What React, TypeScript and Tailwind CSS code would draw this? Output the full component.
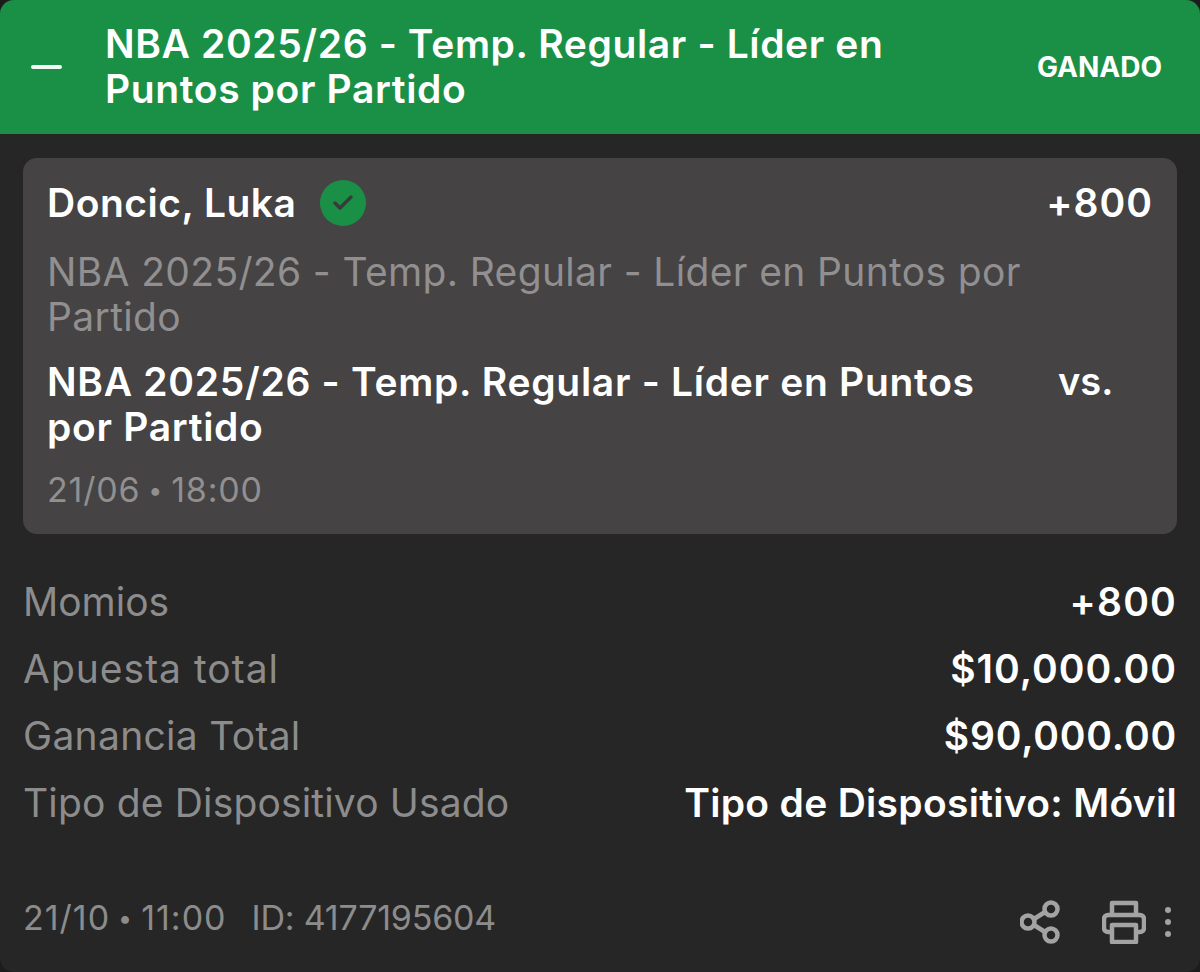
import { Check } from 'lucide-react';

const rows = [
  { label: 'Momios', value: '+800', labelClass: 'tracking-[0px]', valueClass: 'tracking-[1.2px]' },
  { label: 'Apuesta total', value: '$10,000.00', labelClass: 'tracking-[1px]', valueClass: 'tracking-[1px]' },
  { label: 'Ganancia Total', value: '$90,000.00', labelClass: 'tracking-[0.3px]', valueClass: 'tracking-[0.8px]' },
  { label: 'Tipo de Dispositivo Usado', value: 'Tipo de Dispositivo: Móvil', labelClass: 'tracking-[0.16px]', valueClass: 'tracking-[0.3px]' },
];

function Dot() {
  return <span className="text-[25px] mx-[8px] align-[3px]">•</span>;
}

export default function App() {
  return (
    <div className="w-[1200px] h-[972px] bg-[#1c1c1c]">
      <div className="h-full bg-[#262626] rounded-[14px] flex flex-col font-['Inter',sans-serif] overflow-hidden">
        {/* Header */}
        <div className="h-[134px] bg-[#1a9047] flex items-center pl-[31px] pr-[38px] text-white">
          <div className="w-[31px] h-[4px] bg-[#f3f8f4] rounded-full mr-[43px]"></div>
          <div className="flex-1 text-[39px] leading-[45px] font-semibold tracking-[0.62px] -mt-[3px]">
            NBA 2025/26 - Temp. Regular - Líder en<br />Puntos por Partido
          </div>
          <div className="text-[28px] font-bold">GANADO</div>
        </div>

        <div className="px-[23px] pt-[24px] flex-1 flex flex-col">
          {/* Selection card */}
          <div className="h-[376px] bg-[#454344] rounded-[14px] pl-[24px] pr-[24px] pt-[22px]">
            <div className="flex items-center justify-between h-[46px]">
              <div className="flex items-center">
                <span className="text-[39px] font-semibold text-white tracking-[0.5px]">Doncic, Luka</span>
                <span className="ml-[24px] w-[46px] h-[46px] rounded-full bg-[#1a9047] flex items-center justify-center">
                  <Check className="w-[24px] h-[24px] text-[#3a3a3a]" strokeWidth={3.5} />
                </span>
              </div>
              <span className="text-[39px] font-semibold text-white tracking-[1px]">+800</span>
            </div>
            <div className="mt-[23px] text-[39px] leading-[45px] text-[#918f90] tracking-[0.35px]">
              NBA 2025/26 - Temp. Regular - Líder en Puntos por<br />Partido
            </div>
            <div className="mt-[20px] flex items-start text-[39px] leading-[45px] font-semibold text-white tracking-[0.7px]">
              <div className="w-[1011px]">
                NBA 2025/26 - Temp. Regular - Líder en Puntos<br />por Partido
              </div>
              <div className="text-[38px] tracking-[0px]">vs.</div>
            </div>
            <div className="mt-[18px] text-[34px] leading-[45px] text-[#918f90] tracking-[0.8px]">21/06<Dot />18:00</div>
          </div>

          {/* Bet details */}
          <div className="mt-[46px] flex flex-col gap-[22px]">
            {rows.map((row) => (
              <div key={row.label} className="flex items-center justify-between h-[45px] text-[39px]">
                <span className={`text-[#8c8c8c] ${row.labelClass}`}>{row.label}</span>
                <span className={`font-semibold text-white ${row.valueClass}`}>{row.value}</span>
              </div>
            ))}
          </div>

          {/* Footer */}
          <div className="mt-[64px] flex items-center justify-between text-[#8c8c8c]">
            <div className="text-[34px] flex gap-[25px]">
              <span className="tracking-[1px]">21/10<Dot />11:00</span>
              <span className="tracking-[-0.2px]">ID: 4177195604</span>
            </div>
            <div className="flex items-center mr-[6px] mt-[10px]">
              <svg width="40" height="44" viewBox="0 0 40 44" fill="none" stroke="#a3a3a3" strokeWidth="4.5">
                <circle cx="31" cy="9" r="6.5" />
                <circle cx="8" cy="22" r="6.5" />
                <circle cx="31" cy="35" r="6.5" />
                <path d="M14 19 25 12M14 25 25 32" />
              </svg>
              <svg className="ml-[42px]" width="44" height="44" viewBox="0 0 44 44" fill="none" stroke="#a3a3a3" strokeWidth="4.5" strokeLinejoin="round">
                <path d="M10 15V3h24v12" />
                <path d="M9 32H6a4 4 0 0 1-4-4V19a4 4 0 0 1 4-4h32a4 4 0 0 1 4 4v9a4 4 0 0 1-4 4h-3" />
                <path d="M10 25h24v17H10z" />
              </svg>
              <div className="ml-[19px] flex flex-col gap-[6px]">
                <span className="w-[6px] h-[6px] rounded-full bg-[#a3a3a3]"></span>
                <span className="w-[6px] h-[6px] rounded-full bg-[#a3a3a3]"></span>
                <span className="w-[6px] h-[6px] rounded-full bg-[#a3a3a3]"></span>
              </div>
            </div>
          </div>
        </div>
      </div>
    </div>
  );
}
